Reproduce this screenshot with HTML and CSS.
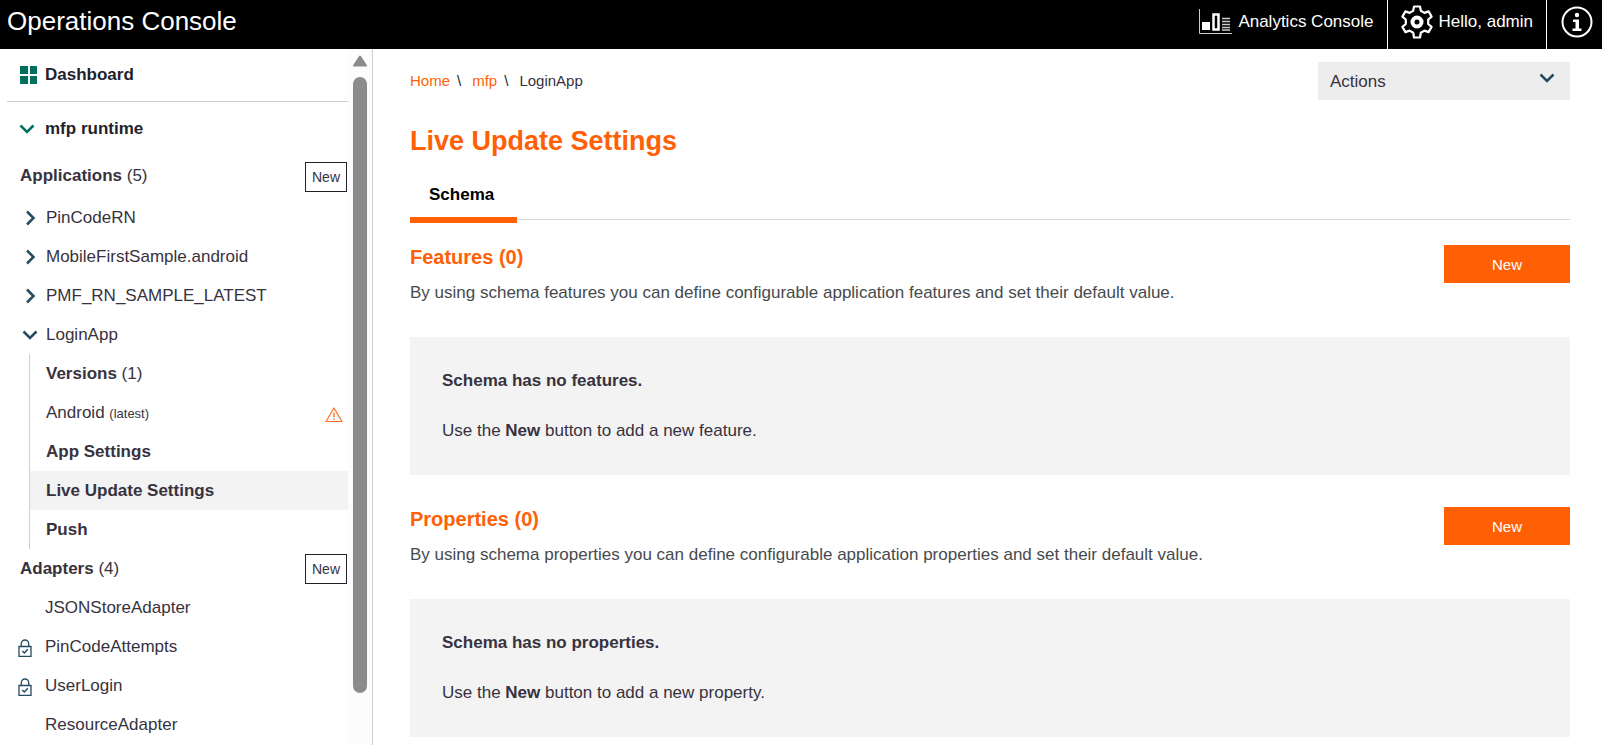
FILE: index.html
```
<!DOCTYPE html>
<html lang="en">
<head>
<meta charset="utf-8">
<title>Operations Console</title>
<link rel="stylesheet" href="styles.css">
</head>
<body>
<svg class="defs" aria-hidden="true">
  <symbol id="right" viewBox="0 0 16 16"><path d="M5 1.5 11.5 8 5 14.500" fill="none" stroke="currentColor" stroke-width="2.500"/></symbol>
  <symbol id="down" viewBox="0 0 16 16"><path d="M1.500 4.500 8 11l6.500-6.500" fill="none" stroke="currentColor" stroke-width="2.500"/></symbol>
  <symbol id="lock" viewBox="0 0 14 18"><path d="M1 7.500h12v9.800H1zM3.300 7.500V4.700a3.700 3.700 0 0 1 7.400 0v2.800" fill="none" stroke="currentColor" stroke-width="1.300"/><path d="m4.300 12 2 2 3.500-3.700" fill="none" stroke="currentColor" stroke-width="1.500"/></symbol>
</svg>
<header class="topbar">
  <h1 class="brand">Operations Console</h1>
  <nav class="toplinks" aria-label="Account">
    <a class="toplink" href="#analytics">
      <svg class="icon-chart" viewBox="0 0 34 26"><path d="M.5 0v24.500H33" fill="none" stroke="#ccc"/><path d="M3 13h8v8H3z" fill="#fff"/><path d="M14.500 5.500h5v15h-5z" fill="none" stroke="#fff" stroke-width="2.500"/><path d="M23 9.500h8M23 12.500h8M23 15.500h8M23 18.500h8M23 21h8" stroke="#ccc" stroke-width="1.300"/></svg>
      Analytics Console</a>
    <a class="toplink" href="#user">
      <svg class="icon-gear" viewBox="0 0 34 34"><path d="M14 1.500h6l.8 4.300 3.600 2.100 4.200-1.500 3 5.200-3.400 2.900v4.500l3.400 2.900-3 5.200-4.200-1.500-3.600 2.100-.8 4.800h-6l-.8-4.800-3.600-2.100-4.200 1.500-3-5.200 3.400-2.900v-4.500l-3.400-2.900 3-5.200 4.200 1.500 3.600-2.100z" fill="none" stroke="#fff" stroke-width="2.200" stroke-linejoin="round"/><circle cx="17" cy="17" r="4.500" fill="none" stroke="#fff" stroke-width="4"/></svg>
      Hello, admin</a>
    <a class="toplink" href="#about" aria-label="About">
      <svg class="icon-info" viewBox="0 0 32 32"><circle cx="16" cy="16" r="14.500" fill="none" stroke="#fff" stroke-width="2"/><circle cx="16" cy="9" r="2.200" fill="#fff"/><path d="M12 13.500h6v9h2.500V25h-9v-2.500h3V16H12z" fill="#fff"/></svg></a>
  </nav>
</header>
<div class="layout">
  <aside class="sidebar">
    <nav class="tree" aria-label="Runtime">
      <a class="dash" href="#dashboard"><svg class="icon-grid" viewBox="0 0 17 18"><path d="M0 0h8v8H0zM10 0h7v8h-7zM0 10h8v8H0zM10 10h7v8h-7z" fill="#006f5c"/></svg>Dashboard</a>
      <a class="runtime" href="#runtime"><svg class="chev"><use href="#down"/></svg>mfp runtime</a>
      <div class="group apps"><span><b>Applications</b> (5)</span><button class="mini">New</button></div>
      <a class="row app" href="#a1"><svg class="chev"><use href="#right"/></svg>PinCodeRN</a>
      <a class="row app" href="#a2"><svg class="chev"><use href="#right"/></svg>MobileFirstSample.android</a>
      <a class="row app" href="#a3"><svg class="chev"><use href="#right"/></svg>PMF_RN_SAMPLE_LATEST</a>
      <a class="row app" href="#a4"><svg class="chev"><use href="#down"/></svg>LoginApp</a>
      <div class="sub">
        <div class="row"><span><b>Versions</b> (1)</span></div>
        <a class="row" href="#android"><span>Android <small>(latest)</small></span><svg class="warn" viewBox="0 0 18 16"><path d="M9 1 17 14.500H1z" fill="none" stroke="#ff6c19" stroke-width="1.200" stroke-linejoin="round"/><path d="M9 5.500v5M9 11.500v1.500" stroke="#ff6c19" stroke-width="1.300"/></svg></a>
        <a class="row strong" href="#settings">App Settings</a>
        <a class="row strong selected" href="#live" aria-current="page">Live Update Settings</a>
        <a class="row strong" href="#push">Push</a>
      </div>
      <div class="group"><span><b>Adapters</b> (4)</span><button class="mini">New</button></div>
      <a class="row adapter" href="#d1"><span class="slot"></span>JSONStoreAdapter</a>
      <a class="row adapter" href="#d2"><span class="slot"><svg class="lock"><use href="#lock"/></svg></span>PinCodeAttempts</a>
      <a class="row adapter" href="#d3"><span class="slot"><svg class="lock"><use href="#lock"/></svg></span>UserLogin</a>
      <a class="row adapter" href="#d4"><span class="slot"></span>ResourceAdapter</a>
    </nav>
    <div class="scrollbar" aria-hidden="true">
      <svg class="arrow" viewBox="0 0 14 12"><path d="M7 1.500 13 10.500H1z" fill="#8b8b8b" stroke="#8b8b8b" stroke-width="2" stroke-linejoin="round"/></svg>
      <div class="thumb"></div>
    </div>
  </aside>
  <main class="content">
    <div class="head">
      <nav class="crumbs" aria-label="Breadcrumb"><a href="#home">Home</a><i>\</i><a href="#mfp">mfp</a><i>\</i><span>LoginApp</span></nav>
      <div class="actions">
        <select class="select" aria-label="Actions"><option>Actions</option></select>
        <svg class="chev caret"><use href="#down"/></svg>
      </div>
    </div>
    <h2 class="title">Live Update Settings</h2>
    <div class="tabs" role="tablist"><button class="tab" role="tab" aria-selected="true">Schema</button></div>
    <section class="section">
      <div class="intro">
        <div><h3 class="subtitle">Features (0)</h3><p class="desc">By using schema features you can define configurable application features and set their default value.</p></div>
        <button class="primary">New</button>
      </div>
      <div class="panel"><p><b>Schema has no features.</b></p><p>Use the <b>New</b> button to add a new feature.</p></div>
    </section>
    <section class="section">
      <div class="intro">
        <div><h3 class="subtitle">Properties (0)</h3><p class="desc">By using schema properties you can define configurable application properties and set their default value.</p></div>
        <button class="primary">New</button>
      </div>
      <div class="panel"><p><b>Schema has no properties.</b></p><p>Use the <b>New</b> button to add a new property.</p></div>
    </section>
  </main>
</div>
</body>
</html>
```
FILE: styles.css
```
* { box-sizing: border-box; }
body {
  margin: 0;
  height: 100vh;
  overflow: hidden;
  display: flex;
  flex-direction: column;
  background: #fff;
  color: #37323e;
  font: 17px/24px "Liberation Sans", Arial, sans-serif;
}
h1, h2, h3, p { margin: 0; }
a { color: inherit; text-decoration: none; }
button, select { font-family: inherit; }
svg { flex: none; }
.defs { display: none; }

.topbar {
  flex: none;
  display: flex;
  justify-content: space-between;
  height: 49px;
  background: #000;
  color: #fff;
}
.brand { padding: 6px 7px; font-size: 26px; line-height: 30px; font-weight: 400; }
.toplinks { display: flex; }
.toplink { display: flex; align-items: center; gap: 5px; padding: 0 13px 5px 12px; font-size: 17px; }
.toplink + .toplink { border-left: 1px solid #fff; }
.toplink:last-child { padding: 0 9px 5px 14px; }
.icon-chart { width: 34px; height: 26px; }
.icon-gear { width: 34px; height: 34px; }
.icon-info { width: 32px; height: 32px; }

.layout { flex: 1; min-height: 0; display: flex; }
.sidebar { flex: none; display: flex; width: 373px; border-right: 1px solid #c8d2d2; overflow: hidden; }
.tree { flex: 1; }
.dash, .runtime { display: flex; align-items: center; font-weight: 700; color: #231f2b; }
.dash { height: 53px; margin-left: 7px; padding-left: 13px; gap: 8px; border-bottom: 1px solid #c8d2d2; }
.runtime { height: 53px; padding-left: 19px; gap: 10px; color: #231f2b; }
.runtime .chev { color: #006f5c; }
.icon-grid { width: 17px; height: 18px; }
.chev { width: 16px; height: 16px; color: #264a60; }
.group { display: flex; align-items: center; justify-content: space-between; height: 39px; padding: 0 1px 0 20px; }
.apps { height: 43px; align-items: flex-end; padding-bottom: 6px; }
.apps span { padding-bottom: 4px; }
.mini {
  width: 42px;
  height: 30px;
  padding: 0;
  border: 1px solid #231f2b;
  background: #fff;
  color: #37323e;
  font-size: 14px;
}
.row { display: flex; align-items: center; height: 39px; }
.app { padding-left: 22px; gap: 8px; }
.adapter { padding-left: 18px; }
.slot { display: flex; width: 27px; padding-top: 3px; }
.lock { width: 14px; height: 18px; color: #264a60; }
.sub { margin-left: 29px; border-left: 1px solid #c8d2d2; }
.sub .row { justify-content: space-between; padding: 1px 5px 0 16px; }
.sub small { font-size: 13px; }
.strong { font-weight: 700; }
.selected { background: #f3f3f3; }
.warn { width: 18px; height: 16px; margin-top: 3px; }
.scrollbar { width: 24px; padding: 6px 5px; background: #fcfcfc; }
.arrow { display: block; width: 14px; height: 12px; }
.thumb { height: 90%; margin-top: 10px; border-radius: 7px; background: #8b8b8b; }

.content { flex: 1; min-width: 0; padding: 13px 32px 0 37px; }
.head { display: flex; justify-content: space-between; }
.crumbs { display: flex; padding-top: 7px; font-size: 15px; }
.crumbs a { color: #ff5f05; }
.crumbs i { margin: 0 11px 0 7px; color: #231f2b; font-style: normal; }
.actions { position: relative; width: 252px; }
.select {
  width: 100%;
  height: 38px;
  padding: 0 12px;
  border: 0;
  border-radius: 0;
  appearance: none;
  background: #ededed;
  color: #37323e;
  font-size: 17px;
}
.caret { position: absolute; top: 8px; right: 15px; pointer-events: none; }
.title { margin-top: 25px; color: #ff5f05; font-size: 27px; line-height: 32px; }
.tabs { margin-top: 21px; border-bottom: 1px solid #d8d8d8; height: 42px; }
.tab {
  height: 45px;
  padding: 0 23px 6px 19px;
  border: 0;
  border-bottom: 6px solid #ff5f05;
  background: none;
  color: #000;
  font-size: 17px;
  font-weight: 700;
}
.section { margin-top: 25px; }
.section + .section { margin-top: 32px; }
.intro { display: flex; justify-content: space-between; height: 92px; }
.subtitle { color: #ff5f05; font-size: 20px; line-height: 24px; }
.desc { margin-top: 12px; color: #464a4d; }
.primary { width: 126px; height: 38px; border: 0; background: #ff5f05; color: #fff; font-size: 15px; }
.panel { display: grid; gap: 26px; padding: 32px; background: #f3f3f3; }
```
